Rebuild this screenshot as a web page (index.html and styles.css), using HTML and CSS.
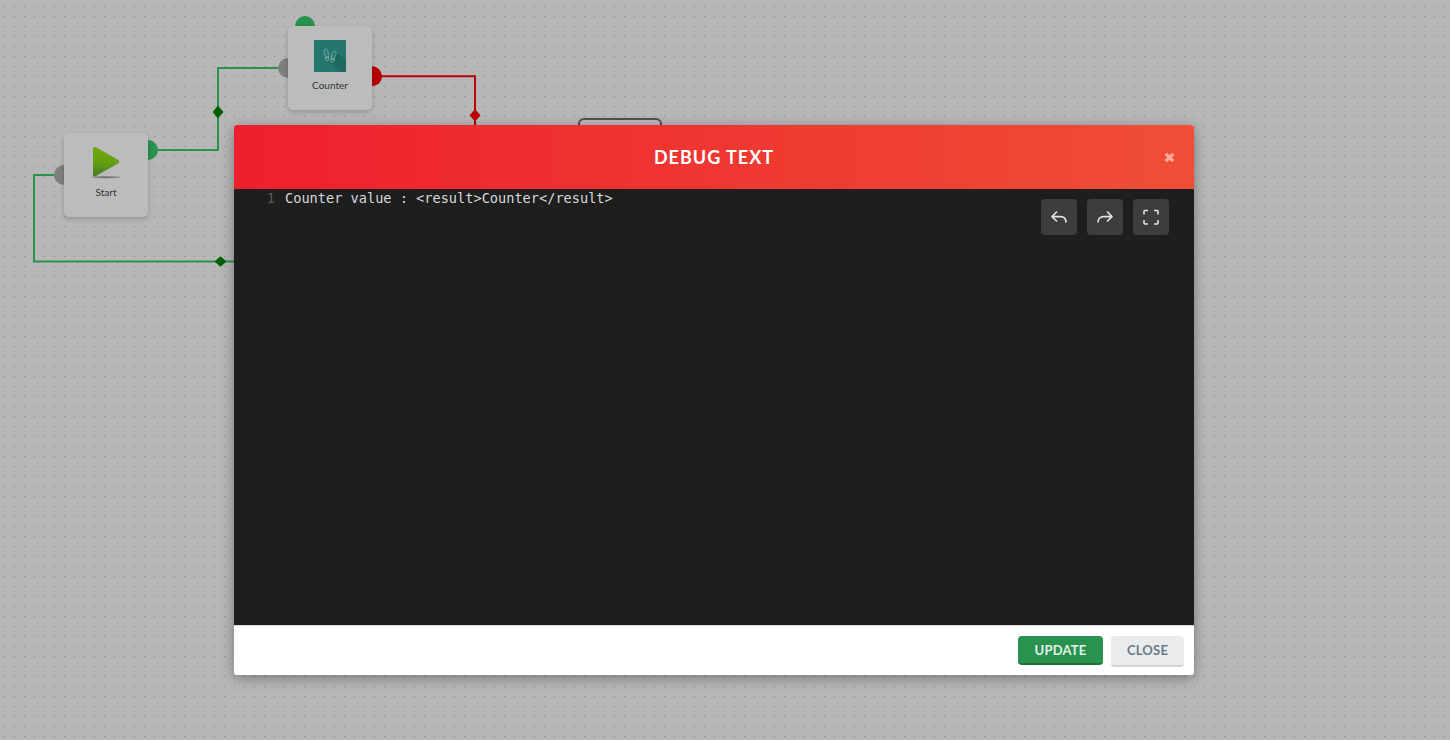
FILE: index.html
```html
<!DOCTYPE html>
<html lang="en">
<head>
<meta charset="utf-8">
<title>Debug text</title>
<link rel="stylesheet" href="styles.css">
</head>
<body>
<div class="canvas">
  <svg class="wires" width="1450" height="740" fill="none">
    <g stroke="#28924e" stroke-width="2">
      <path d="M157 150H218V68H279"/>
      <path d="M55 175H34V261.5H240"/>
    </g>
    <path d="M381 76.3H475V130" stroke="#b80000" stroke-width="2"/>
    <g fill="#006000">
      <path d="M218 105.5L223.5 112L218 118.500L212.500 112Z"/>
      <path d="M220.500 256.200L226.500 261.500L220.500 266.800L214.500 261.500Z"/>
    </g>
    <path d="M475 109L480.500 115.200L475 121.500L469.500 115.200Z" fill="#b80000"/>
    <g fill="#28924e"><circle cx="305" cy="26" r="10"/><circle cx="148" cy="150" r="10"/></g>
    <g fill="#7f7f7f"><circle cx="288" cy="68" r="10"/><circle cx="64" cy="175" r="10"/></g>
    <circle cx="372" cy="76.300" r="10" fill="#b80000"/>
  </svg>
  <div class="node node-counter">
    <svg class="node-icon" width="32" height="32" viewBox="0 0 32 32" fill="none">
      <path fill="#24766e" d="M0 0H32V32H0Z"/>
      <path fill="#20685f" d="M21 11L32 20V32H27L13 20L20 19Z"/>
      <g stroke="#86b4ae" stroke-width=".9">
        <path d="M10.200 10.200C11.100 8.400 13.300 8.700 13.900 11.300C14.400 13.700 14.100 15 14.500 17H11.400C11.600 14.800 9.500 12.800 10.200 10.200Z"/>
        <path d="M11.500 17.800L14.600 17.300C15.600 21.300 12.400 22.300 11.500 17.800Z"/>
        <path d="M21.900 12.200C21.200 10.500 18.900 10.800 18.100 13.400C17.500 15.600 17.900 16.500 17.200 18.600L20.300 19.100C20.300 17 22.600 14.700 21.900 12.200Z"/>
        <path d="M20.300 19.900L17.200 19.300C15.600 22.600 19.300 24.200 20.300 19.900Z"/>
      </g>
    </svg>
    <span>Counter</span>
  </div>
  <div class="node node-start">
    <svg class="node-icon" width="32" height="32" viewBox="0 0 32 32">
      <defs><linearGradient id="play" x2="0" y2="1"><stop stop-color="#6ea80f"/><stop offset=".5" stop-color="#66a011"/><stop offset="1" stop-color="#427d25"/></linearGradient>
      <radialGradient id="ground"><stop offset=".2" stop-color="#6b6b6b"/><stop offset="1" stop-color="#999"/></radialGradient></defs>
      <ellipse cx="16" cy="30.200" rx="15" ry="1.200" fill="url(#ground)"/>
      <path fill="url(#play)" d="M3 1.500C3 0 5-.5 6.200.2L28.400 13C29.600 14 29.500 15.400 28.300 16.200L6 29C4.500 29.800 3 29.300 3 28Z"/>
    </svg>
    <span>Start</span>
  </div>
  <div class="node-outline"></div>
</div>
<section class="modal">
  <header class="modal-header">
    <h1>DEBUG TEXT</h1>
    <svg class="modal-close" width="11" height="11" viewBox="0 0 11 11"><path d="M1.800 1.800L9.200 9.200M9.200 1.800L1.800 9.200"/></svg>
  </header>
  <div class="editor">
    <span class="line-number">1</span>
    <code>Counter value : &lt;result&gt;Counter&lt;/result&gt;</code>
    <div class="tools">
      <div class="tool"><svg width="18" height="18" viewBox="0 0 18 18"><path d="M7 3.500L2 8.600L7 13.500M2.500 8.600H10.500C14 8.600 16 11 16 14.500"/></svg></div>
      <div class="tool"><svg width="18" height="18" viewBox="0 0 18 18"><path d="M11 3.500L16 8.600L11 13.500M15.500 8.600H7.500C4 8.600 2 11 2 14.500"/></svg></div>
      <div class="tool"><svg width="18" height="18" viewBox="0 0 18 18"><path d="M2 6.500V3.500Q2 2.500 3 2.500H6M12 2.500H15Q16 2.500 16 3.500V6.500M16 12V15Q16 16 15 16H12M6 16H3Q2 16 2 15V12"/></svg></div>
    </div>
  </div>
  <footer class="modal-footer">
    <button class="btn btn-update">UPDATE</button>
    <button class="btn btn-close">CLOSE</button>
  </footer>
</section>
</body>
</html>
```
FILE: styles.css
```css
* { box-sizing: border-box; }
body {
  margin: 0;
  height: 740px;
  display: flex;
  overflow: hidden;
  font-family: Lato, sans-serif;
  background: #b7b7b7;
}
.canvas {
  position: absolute;
  inset: 0;
  background: conic-gradient(from 90deg at 9px 9px, #848484 90deg, transparent 0) -5px -3px / 10px 10px;
}
.wires { position: absolute; left: 0; top: 0; }
.node {
  position: absolute;
  width: 84px;
  height: 84px;
  padding-top: 14px;
  display: flex;
  flex-direction: column;
  align-items: center;
  border-radius: 5px;
  background: #bcbcbc;
  box-shadow: 0 2px 5px rgba(0, 0, 0, .2);
  color: #303236;
  font-size: 10px;
  line-height: 12px;
}
.node-icon { overflow: visible; margin-bottom: 7px; }
.node-counter { left: 288px; top: 26px; }
.node-start { left: 64px; top: 133px; }
.node-outline {
  position: absolute;
  left: 578px;
  top: 118px;
  width: 84px;
  height: 84px;
  border: 2px solid #4e4e4e;
  border-radius: 6px;
  background: #bababa;
}
.modal {
  position: relative;
  width: 960px;
  height: 550px;
  margin: 125px 0 0 234px;
  display: flex;
  flex-direction: column;
  border-radius: 3px;
  overflow: hidden;
  background: #fff;
  box-shadow: 0 3px 14px rgba(0, 0, 0, .35);
}
.modal-header {
  height: 64px;
  padding: 0 19px 0 30px;
  display: flex;
  align-items: center;
  background: linear-gradient(90deg, #ee1f2d, #f04e36);
  color: #fff;
}
.modal-header h1 {
  flex: 1;
  margin: 0;
  text-align: center;
  font-size: 18px;
  font-weight: 700;
  line-height: 24px;
  letter-spacing: 1px;
}
.modal-close { stroke: #f9aaa0; stroke-width: 3.3; }
.editor {
  height: 436px;
  padding: 0 25px 0 0;
  display: flex;
  background: #1e1e1e;
  font: 13.62px/19px "DejaVu Sans Mono", monospace;
}
.line-number { width: 41px; margin-right: 10px; text-align: right; color: #5a5a5a; }
code { font: inherit; color: #d9d9d9; white-space: pre; }
.tools { margin: 10px 0 0 auto; display: flex; align-items: flex-start; gap: 10px; }
.tool {
  width: 36px;
  height: 36px;
  display: grid;
  place-items: center;
  border-radius: 4px;
  background: #3d3d3d;
}
.tool path { fill: none; stroke: #e4e4e4; stroke-width: 1.6; stroke-linejoin: round; }
.modal-footer {
  height: 50px;
  padding: 10px 10px 0;
  display: flex;
  justify-content: flex-end;
  align-items: flex-start;
  gap: 8px;
  border-top: 1px solid #dcdcdc;
}
.btn {
  padding: 0;
  border: 0;
  border-radius: 4px;
  font: 700 13px/27px Lato, sans-serif;
  letter-spacing: .2px;
}
.btn-update { width: 85px; height: 29px; padding-top: 1px; line-height: 26px; background: #28924e; border-bottom: 2px solid #1c743b; color: #e3f2e7; }
.btn-close { width: 73px; height: 31px; background: #e9ebec; border-bottom: 2px solid #cfd4d9; color: #6c7a89; }
```
